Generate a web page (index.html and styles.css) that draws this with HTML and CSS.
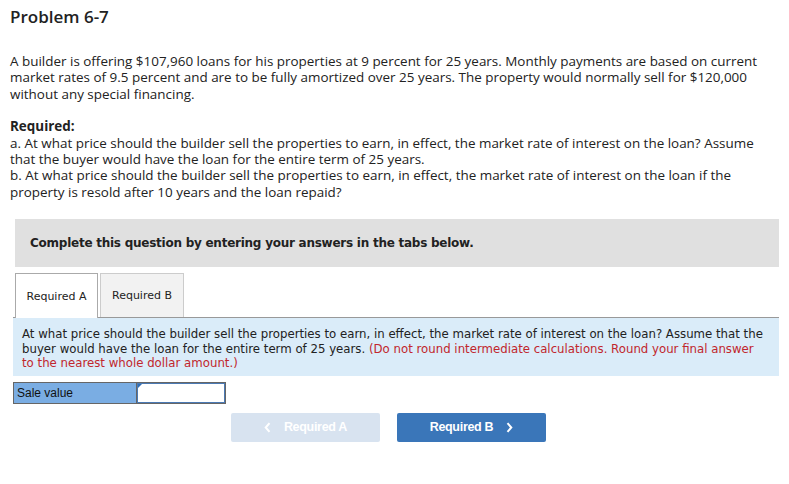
FILE: index.html
```html
<!DOCTYPE html>
<html>
<head>
<meta charset="utf-8">
<link rel="stylesheet" href="styles.css">
</head>
<body>
<div class="page">
  <h1 class="title">Problem 6-7</h1>
  <p class="para intro">A builder is offering $107,960 loans for his properties at 9 percent for 25 years. Monthly payments are based on current market rates of 9.5 percent and are to be fully amortized over 25 years. The property would normally sell for $120,000 without any special financing.</p>
  <p class="para req"><strong>Required:</strong><br>a. At what price should the builder sell the properties to earn, in effect, the market rate of interest on the loan? Assume that the buyer would have the loan for the entire term of 25 years.<br>b. At what price should the builder sell the properties to earn, in effect, the market rate of interest on the loan if the property is resold after 10 years and the loan repaid?</p>
  <div class="notice">Complete this question by entering your answers in the tabs below.</div>
  <div class="tabs">
    <div class="tab active">Required A</div>
    <div class="tab">Required B</div>
  </div>
  <div class="question"><span>At what price should the builder sell the properties to earn, in effect, the market rate of interest on the loan? Assume that the</span> <span>buyer would have the loan for the entire term of 25 years.</span> <span class="red">(Do not round intermediate calculations. Round your final answer</span> <span class="red">to the nearest whole dollar amount.)</span></div>
  <div class="answer">
    <div class="label">Sale value</div>
    <div class="input"><span class="marker"></span></div>
  </div>
  <div class="nav">
    <div class="btn prev"><svg class="chev left" width="7" height="11" viewBox="0 0 7 11"><path d="M5.5 1.2 L1.7 5.5 L5.5 9.8" fill="none" stroke="#fff" stroke-width="2"/></svg>Required A</div>
    <div class="btn next">Required B<svg class="chev right" width="7" height="11" viewBox="0 0 7 11"><path d="M1.5 1.2 L5.3 5.5 L1.5 9.8" fill="none" stroke="#fff" stroke-width="2"/></svg></div>
  </div>
</div>
</body>
</html>
```
FILE: styles.css
```css
html, body { margin: 0; padding: 0; background: #fff; }
.page {
  padding: 5px 10px 0 10px;
  font-family: "Open Sans", "Liberation Sans", sans-serif;
  color: #222;
}
.title {
  margin: 0;
  font-size: 17px;
  font-weight: 600;
  line-height: 24px;
  color: #222;
}
.para {
  margin: 0;
  font-size: 13.45px;
  line-height: 16.4px;
}
.intro { margin-top: 24px; }
.req { margin-top: 16px; }
.req strong { font-weight: 700; }
.notice {
  margin: 19px 0 0 5px;
  height: 48px;
  background: #e0e0e0;
  display: flex;
  align-items: center;
  padding-left: 15px;
  font-family: "DejaVu Sans", Verdana, sans-serif;
  font-weight: 700;
  font-size: 12px;
  letter-spacing: -0.25px;
  color: #222;
}
.tabs {
  display: flex;
  margin: 6px 0 0 5px;
  gap: 2px;
}
.tab {
  width: 84px;
  height: 44px;
  box-sizing: border-box;
  display: flex;
  align-items: center;
  justify-content: center;
  font-family: "DejaVu Sans", Verdana, sans-serif;
  font-size: 11px;
  color: #222;
  background: #f2f2f2;
  border: 1px solid #ccc;
  border-bottom: none;
}
.tab.active {
  width: 83px;
  background: #fff;
  border-color: #aaa;
  height: 45px;
  margin-bottom: -1px;
  position: relative;
  z-index: 1;
}
.question {
  margin: 0 0 0 3px;
  border-top: 1px solid #999;
  background: #daecf9;
  padding: 9px 10px 5px 9px;
  font-family: "DejaVu Sans", Verdana, sans-serif;
  font-size: 11.75px;
  line-height: 14.5px;
  color: #222;
}
.red { color: #c1272d; }
.answer {
  display: flex;
  margin: 6px 0 0 3px;
}
.label {
  width: 123px;
  height: 22px;
  box-sizing: border-box;
  background: #7aade3;
  border: 1px solid #666;
  border-right: none;
  font-family: "Liberation Sans", Arial, sans-serif;
  font-size: 12px;
  line-height: 20px;
  padding-left: 3px;
  color: #111;
}
.input {
  width: 90px;
  height: 22px;
  box-sizing: border-box;
  background: #fff;
  border: 1px solid #666;
  box-shadow: inset 0 0 0 1px #4a79b3;
  position: relative;
}
.marker {
  position: absolute;
  left: 1px;
  top: 1px;
  width: 0;
  height: 0;
  border-top: 4px solid #2f6db5;
  border-right: 4px solid transparent;
}
.nav {
  display: flex;
  gap: 17px;
  margin: 9px 0 0 221px;
}
.btn {
  width: 149px;
  height: 29px;
  border-radius: 2px;
  display: flex;
  align-items: center;
  justify-content: center;
  font-family: "Liberation Sans", Arial, sans-serif;
  font-weight: 700;
  font-size: 12.5px;
  color: #fff;
  letter-spacing: -0.3px;
}
.btn.prev { background: #d8e3f0; }
.btn.next { background: #3a76b9; }
.chev.left { margin-right: 13px; }
.chev.right { margin-left: 13px; }
```
